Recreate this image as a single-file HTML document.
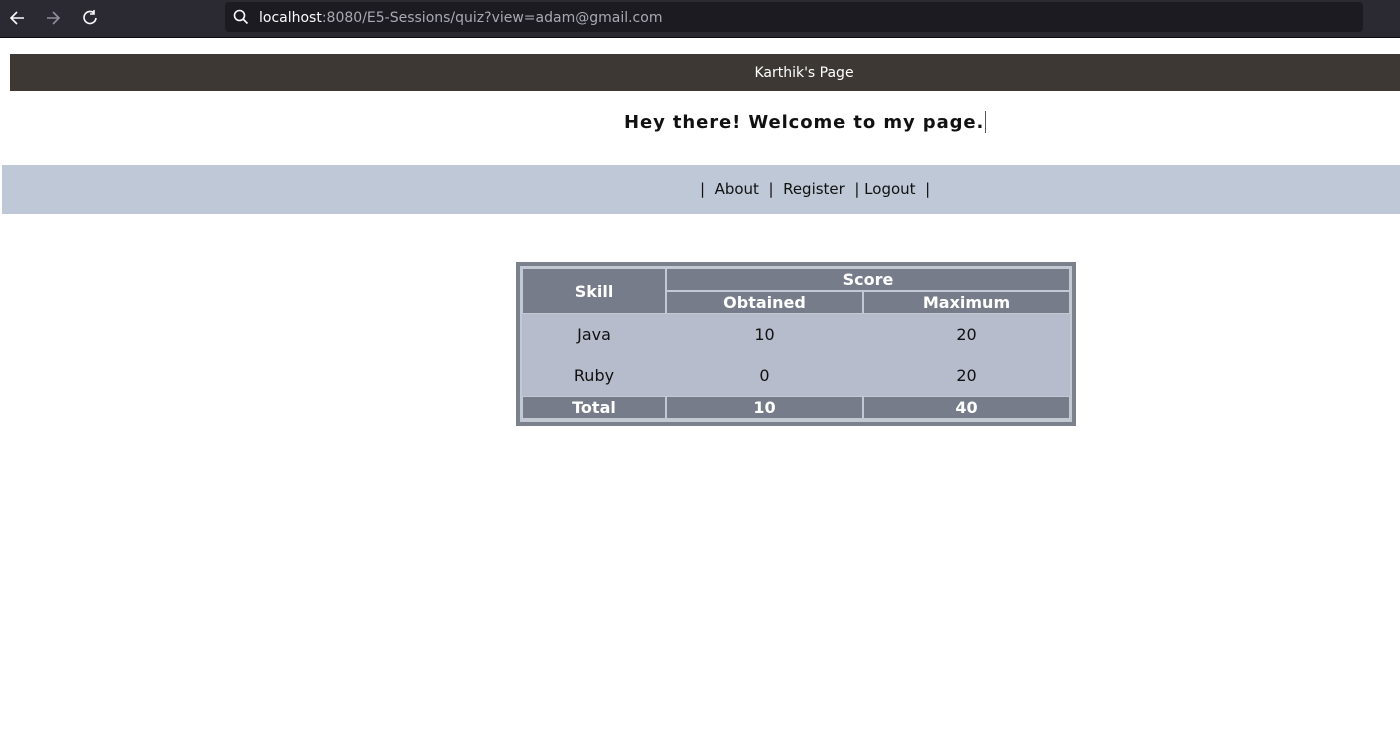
<!DOCTYPE html>
<html><head><style>
*{margin:0;padding:0;box-sizing:border-box}
body{width:1400px;height:742px;background:#fff;position:relative;overflow:hidden;font-family:"DejaVu Sans","Liberation Sans",sans-serif}
.a{position:absolute}
.c{position:absolute;display:flex;align-items:center;justify-content:center;font-size:16px}
.h{background:#767c89;color:#fff;font-weight:bold}
.b{color:#111}
</style></head><body>
<div class="a" style="left:0;top:0;width:1400px;height:37px;background:#2b2a33"></div>
<div class="a" style="left:0;top:37px;width:1400px;height:1px;background:#0c0c0d"></div>
<div class="a" style="left:225px;top:2px;width:1138px;height:30px;background:#1c1b22;border-radius:4px"></div>
<svg class="a" style="left:8px;top:8px" width="100" height="20" viewBox="0 0 100 20">
<path d="M16 10H4M9 4L3 10L9 16" stroke="#fbfbfe" stroke-width="1.6" fill="none"/>
<path d="M39 10H51M45 4L51 10L45 16" stroke="#8f8f9d" stroke-width="1.6" fill="none"/>
<path d="M86 5A6 6 0 1 0 88 10M86 2V6H82" stroke="#fbfbfe" stroke-width="1.6" fill="none"/>
</svg>
<svg class="a" style="left:233px;top:9px" width="16" height="16"><circle cx="6.5" cy="6.5" r="5" stroke="#fbfbfe" stroke-width="1.6" fill="none"/><path d="M10 10L14.5 14.5" stroke="#fbfbfe" stroke-width="1.6"/></svg>
<div class="a" style="left:259px;top:10px;font-size:14px;color:#fbfbfe;white-space:nowrap">localhost<span style="color:#a9a9b3">:8080/E5-Sessions/quiz?view=adam@gmail.com</span></div>

<div class="a" style="left:10px;top:54px;width:1390px;height:37px;background:#3d3833"></div>
<div class="a" style="left:10px;top:65px;width:1588px;text-align:center;color:#fff;font-size:14px">Karthik's Page</div>
<div class="a" style="left:624px;top:112px;font-size:18px;font-weight:bold;letter-spacing:0.9px;color:#111;white-space:nowrap">Hey there! Welcome to my page.</div>
<div class="a" style="left:985px;top:111px;width:1px;height:22px;background:#555"></div>
<div class="a" style="left:2px;top:165px;width:1398px;height:49px;background:#bec8d6"></div>
<div class="a" style="left:700px;top:180px;font-size:15px;color:#111;white-space:pre">|  About  |  Register  | Logout  |</div>

<div class="a" style="left:516px;top:262px;width:560px;height:164px;background:#7a818d"></div>
<div class="a" style="left:520px;top:266px;width:552px;height:156px;background:#c3c8d3"></div>
<div class="a" style="left:522px;top:314px;width:548px;height:82px;background:#b6bccb"></div>
<div class="c h" style="left:523px;top:269px;width:142px;height:44px">Skill</div>
<div class="c h" style="left:667px;top:269px;width:402px;height:21px">Score</div>
<div class="c h" style="left:667px;top:292px;width:195px;height:21px">Obtained</div>
<div class="c h" style="left:864px;top:292px;width:205px;height:21px">Maximum</div>
<div class="c b" style="left:523px;top:314px;width:142px;height:41px">Java</div>
<div class="c b" style="left:667px;top:314px;width:195px;height:41px">10</div>
<div class="c b" style="left:864px;top:314px;width:205px;height:41px">20</div>
<div class="c b" style="left:523px;top:355px;width:142px;height:41px">Ruby</div>
<div class="c b" style="left:667px;top:355px;width:195px;height:41px">0</div>
<div class="c b" style="left:864px;top:355px;width:205px;height:41px">20</div>
<div class="c h" style="left:523px;top:397px;width:142px;height:21px">Total</div>
<div class="c h" style="left:667px;top:397px;width:195px;height:21px">10</div>
<div class="c h" style="left:864px;top:397px;width:205px;height:21px">40</div>
</body></html>
